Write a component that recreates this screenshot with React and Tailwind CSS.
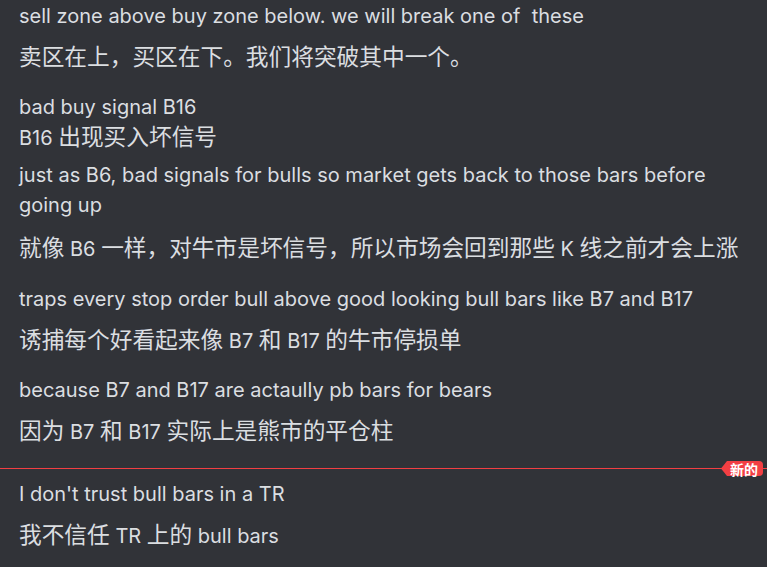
import React from "react";

const CJK = /([\u3000-\u303f\u4e00-\u9fff\uff00-\uffef]+)/;

function Rich({ text }) {
  return text.split(CJK).map((p, i) =>
    i % 2 ? (
      <span key={i} className="text-[22.7px]">
        {p}
      </span>
    ) : (
      <React.Fragment key={i}>{p}</React.Fragment>
    )
  );
}

function En({ children, className = "" }) {
  return <div className={`leading-[30px] ${className}`}>{children}</div>;
}

function Zh({ text, className = "" }) {
  return (
    <div className={`leading-[32px] ${className}`}>
      <Rich text={text} />
    </div>
  );
}

export default function App() {
  return (
    <div className="w-[767px] h-[567px] overflow-hidden bg-[#313338] text-[#dbdee1] text-[20px] font-[Inter,'Noto_Sans_CJK_SC',sans-serif]">
      <div className="flex flex-col pt-[1px]">
        <div className="pl-[19px] pr-[20px]">
          <En>sell zone above buy zone below. we will break one of&nbsp; these</En>
          <Zh className="mt-[10px]" text="卖区在上，买区在下。我们将突破其中一个。" />
        </div>
        <div className="pl-[19px] pr-[20px] mt-[18px]">
          <En>bad buy signal B16</En>
          <div className="leading-[30px]">
            <Rich text="B16 出现买入坏信号" />
          </div>
        </div>
        <div className="pl-[19px] pr-[20px] mt-[7px]">
          <En>just as B6, bad signals for bulls so market gets back to those bars before going up</En>
          <Zh className="mt-[12px]" text="就像 B6 一样，对牛市是坏信号，所以市场会回到那些 K 线之前才会上涨" />
        </div>
        <div className="pl-[19px] pr-[20px] mt-[19px]">
          <En>traps every stop order bull above good looking bull bars like B7 and B17</En>
          <Zh className="mt-[10px]" text="诱捕每个好看起来像 B7 和 B17 的牛市停损单" />
        </div>
        <div className="pl-[19px] pr-[20px] mt-[18px]">
          <En>because B7 and B17 are actaully pb bars for bears</En>
          <Zh className="mt-[10px]" text="因为 B7 和 B17 实际上是熊市的平仓柱" />
        </div>
        <div className="relative mt-[20px] h-px bg-[#f23f43]">
          <div className="absolute right-[4px] top-[-7px] flex h-[15px] items-center">
            <svg width="6" height="15" viewBox="0 0 6 15" className="block">
              <path d="M6 0 L6 15 L0 7.5 Z" fill="#f23f43" />
            </svg>
            <span className="flex h-[15px] items-center rounded-r-[4px] bg-[#f23f43] pl-[3px] pr-[5px] text-[14px] font-bold leading-none text-white font-['Noto_Sans_CJK_SC',sans-serif]">
              新的
            </span>
          </div>
        </div>
        <div className="pl-[19px] pr-[20px] mt-[10px]">
          <En>I don't trust bull bars in a TR</En>
          <Zh className="mt-[10px]" text="我不信任 TR 上的 bull bars" />
        </div>
      </div>
    </div>
  );
}
